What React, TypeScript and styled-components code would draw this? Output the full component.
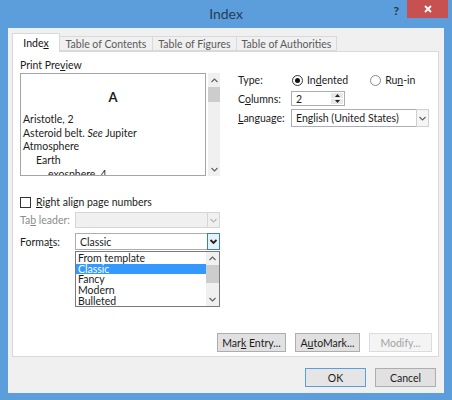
import React from 'react';
import styled, { createGlobalStyle, css } from 'styled-components';

const Global = createGlobalStyle`
  html, body { margin: 0; padding: 0; width: 452px; height: 400px; overflow: hidden; background: #5c9ddb; }
  body { font-family: Lato, "Noto Sans", sans-serif; font-size: 10.5px; color: #1b1b1b; }
  #root { width: 452px; height: 400px; }
  * { box-sizing: border-box; }
`;

const Window = styled.div`
  width: 452px;
  height: 400px;
  background: #5c9ddb;
  display: flex;
  flex-direction: column;
`;

const TitleBar = styled.div`
  height: 28px;
  display: grid;
  grid-template-columns: 1fr auto 1fr;
`;

const Title = styled.div`
  grid-column: 2;
  align-self: center;
  font-size: 14px;
  color: #263d57;
  padding-bottom: 1px;
`;

const Controls = styled.div`
  grid-column: 3;
  display: flex;
  justify-content: flex-end;
  align-items: flex-start;
  padding-right: 4px;
`;

const Help = styled.div`
  font-size: 12px;
  font-weight: 700;
  color: #23384d;
  margin: 3px 8px 0 0;
`;

const Close = styled.div`
  width: 41px;
  height: 18px;
  background: #c75050;
  display: flex;
  align-items: center;
  justify-content: center;
`;

const Client = styled.div`
  flex: 1;
  margin: 0 8px 7px 8px;
  background: #f0f0f0;
  padding: 5px 5px 6px 4px;
  display: flex;
  flex-direction: column;
`;

const TabStrip = styled.div`
  height: 19px;
  display: flex;
  align-items: flex-end;
  margin-bottom: -1px;
  position: relative;
  z-index: 1;
`;

const Tab = styled.div<{ $w: number; $active?: boolean }>`
  width: ${p => p.$w}px;
  height: ${p => (p.$active ? 19 : 15)}px;
  margin-bottom: ${p => (p.$active ? 0 : 1)}px;
  border: 1px solid #d9d9d9;
  border-bottom: ${p => (p.$active ? 'none' : '1px solid #d9d9d9')};
  border-left-width: ${p => (p.$active ? 1 : 0)}px;
  background: ${p => (p.$active ? '#fff' : '#f0f0f0')};
  color: ${p => (p.$active ? '#111' : '#5a5a5a')};
  display: flex;
  align-items: center;
  justify-content: center;
  padding-bottom: ${p => (p.$active ? 1 : 0)}px;
`;

const Panel = styled.div`
  height: 306px;
  background: #fff;
  border: 1px solid #d9d9d9;
  padding: 6px 6px 4px 7px;
  display: flex;
  flex-direction: column;
`;

const Columns = styled.div`
  display: grid;
  grid-template-columns: 200px 191px;
  column-gap: 18px;
  flex: 1;
  align-items: start;
`;

const LeftCol = styled.div`
  display: flex;
  flex-direction: column;
`;

const RightCol = styled.div`
  display: flex;
  flex-direction: column;
  padding-top: 15px;
`;

const Label = styled.div<{ $disabled?: boolean; $w?: number }>`
  line-height: 14px;
  white-space: nowrap;
  color: ${p => (p.$disabled ? '#8c8c8c' : '#1b1b1b')};
  ${p => p.$w && css`width: ${p.$w}px; flex: none;`}
`;

const PreviewRow = styled.div`
  margin-top: 1px;
  height: 103px;
  display: flex;
  gap: 2px;
`;

const PreviewBox = styled.div`
  width: 186px;
  border: 1px solid #a5a5a5;
  overflow: hidden;
  padding: 0 2px;
`;

const PreviewHeading = styled.div`
  text-align: center;
  font-weight: 700;
  font-size: 13px;
  line-height: 16px;
  margin: 15px 0 8px;
`;

const PreviewLine = styled.div<{ $indent?: number }>`
  line-height: 13.7px;
  padding-left: ${p => p.$indent ?? 0}px;
  white-space: nowrap;
`;

const Em = styled.span`
  font-style: italic;
`;

const ScrollBar = styled.div<{ $w?: number }>`
  width: ${p => p.$w ?? 12}px;
  background: #f0f0f0;
  display: flex;
  flex-direction: column;
`;

const ScrollArrow = styled.div<{ $h?: number }>`
  height: ${p => p.$h ?? 14}px;
  display: flex;
  align-items: center;
  justify-content: center;
  flex: none;
`;

const Thumb = styled.div<{ $h: number }>`
  height: ${p => p.$h}px;
  background: #cdcdcd;
  flex: none;
`;

const Spacer = styled.div`
  flex: 1;
`;

const CheckRow = styled.div`
  margin-top: 19px;
  display: flex;
  align-items: center;
  gap: 5px;
  height: 14px;
`;

const CheckBox = styled.div`
  width: 11px;
  height: 11px;
  border: 1px solid #333;
  background: #fff;
`;

const FieldRow = styled.div<{ $mt: number }>`
  margin-top: ${p => p.$mt}px;
  display: flex;
  align-items: center;
  position: relative;
`;

const Select = styled.div<{ $w: number; $h: number; $disabled?: boolean }>`
  width: ${p => p.$w}px;
  height: ${p => p.$h}px;
  border: 1px solid ${p => (p.$disabled ? '#d5d5d5' : '#abadb3')};
  background: ${p => (p.$disabled ? '#f0f0f0' : '#fff')};
  display: flex;
  align-items: stretch;
  position: relative;
`;

const SelectText = styled.div`
  flex: 1;
  display: flex;
  align-items: center;
  padding-left: 4px;
  white-space: nowrap;
`;

const DropButton = styled.div<{ $variant: 'plain' | 'active' | 'disabled' }>`
  width: 13px;
  margin: -1px -1px -1px 0;
  display: flex;
  align-items: center;
  justify-content: center;
  ${p =>
    p.$variant === 'active'
      ? css`background: #e5f1fb; border: 1px solid #3c7fb1;`
      : p.$variant === 'disabled'
      ? css`background: #f0f0f0; border: 1px solid #d5d5d5;`
      : css`background: #f5f5f5; border: 1px solid #cfcfcf;`}
`;

const ListBox = styled.div`
  position: absolute;
  left: 55px;
  top: 100%;
  margin-top: 1px;
  width: 145px;
  height: 56px;
  border: 1px solid #7a7a7a;
  background: #fff;
  display: flex;
`;

const ListItems = styled.div`
  flex: 1;
  padding-top: 1px;
`;

const ListItem = styled.div<{ $selected?: boolean }>`
  height: 10.7px;
  line-height: 10.7px;
  padding-left: 2px;
  background: ${p => (p.$selected ? '#3399ff' : 'transparent')};
  color: ${p => (p.$selected ? '#fff' : '#1b1b1b')};
`;

const RadioGroup = styled.div`
  display: flex;
  align-items: center;
  height: 14px;
`;

const RadioOption = styled.div<{ $gap?: number }>`
  display: flex;
  align-items: center;
  gap: 4px;
  margin-right: ${p => p.$gap ?? 0}px;
`;

const RadioCircle = styled.div<{ $on?: boolean }>`
  width: 11px;
  height: 11px;
  border-radius: 50%;
  border: 1px solid ${p => (p.$on ? '#333' : '#8a8a8a')};
  background: #fff;
  display: flex;
  align-items: center;
  justify-content: center;
  &::after {
    content: '';
    display: ${p => (p.$on ? 'block' : 'none')};
    width: 5px;
    height: 5px;
    border-radius: 50%;
    background: #111;
  }
`;

const SpinBox = styled.div`
  width: 54px;
  height: 15px;
  border: 1px solid #abadb3;
  background: #fff;
  display: flex;
`;

const SpinButtons = styled.div`
  width: 12px;
  display: flex;
  flex-direction: column;
  margin: 1px 1px 1px 0;
  gap: 1px;
`;

const SpinBtn = styled.div`
  flex: 1;
  background: #e8e8e8;
  display: flex;
  align-items: center;
  justify-content: center;
`;

const BottomRow = styled.div<{ $gap: number }>`
  display: flex;
  justify-content: flex-end;
  gap: ${p => p.$gap}px;
`;

const Button = styled.div<{ $w: number; $variant?: 'default' | 'disabled' }>`
  width: ${p => p.$w}px;
  height: 19px;
  display: flex;
  align-items: center;
  justify-content: center;
  white-space: pre;
  border: 1px solid #adadad;
  background: #e1e1e1;
  color: #1b1b1b;
  ${p =>
    p.$variant === 'default' &&
    css`
      border-color: #5a9ee0;
      background: #e5e5e5;
    `}
  ${p =>
    p.$variant === 'disabled' &&
    css`
      border-color: #dcdcdc;
      background: #f4f4f4;
      color: #a3a3a3;
    `}
`;

const DialogButtons = styled(BottomRow)`
  margin-top: 11px;
  padding-right: 3px;
`;

const U = styled.span`
  text-decoration: underline;
  text-underline-offset: 1px;
`;

const Chevron = ({ up, color = '#606060', bold }: { up?: boolean; color?: string; bold?: boolean }) => (
  <svg width="7" height="5" viewBox="0 0 7 5">
    <path
      d={up ? 'M0.5 4 L3.5 1 L6.5 4' : 'M0.5 1 L3.5 4 L6.5 1'}
      fill="none"
      stroke={color}
      strokeWidth={bold ? 1.8 : 1.1}
    />
  </svg>
);

const Tri = ({ up }: { up?: boolean }) => (
  <svg width="5" height="3" viewBox="0 0 5 3">
    <path d={up ? 'M0 3 L2.5 0 L5 3 Z' : 'M0 0 L5 0 L2.5 3 Z'} fill="#222" />
  </svg>
);

export default function App() {
  return (
    <>
      <Global />
      <Window>
        <TitleBar>
          <Title>Index</Title>
          <Controls>
            <Help>?</Help>
            <Close>
              <svg width="8" height="8" viewBox="0 0 8 8">
                <path d="M1 1 L7 7 M7 1 L1 7" stroke="#fff" strokeWidth="1.8" />
              </svg>
            </Close>
          </Controls>
        </TitleBar>
        <Client>
          <TabStrip>
            <Tab $w={48} $active>
              <span>
                Inde<U>x</U>
              </span>
            </Tab>
            <Tab $w={93}>Table of Contents</Tab>
            <Tab $w={84}>Table of Figures</Tab>
            <Tab $w={100}>Table of Authorities</Tab>
          </TabStrip>
          <Panel>
            <Columns>
              <LeftCol>
                <Label>
                  Print Pre<U>v</U>iew
                </Label>
                <PreviewRow>
                  <PreviewBox>
                    <PreviewHeading>A</PreviewHeading>
                    <PreviewLine>Aristotle, 2</PreviewLine>
                    <PreviewLine>
                      Asteroid belt. <Em>See</Em> Jupiter
                    </PreviewLine>
                    <PreviewLine>Atmosphere</PreviewLine>
                    <PreviewLine $indent={13}>Earth</PreviewLine>
                    <PreviewLine $indent={25}>exosphere, 4</PreviewLine>
                  </PreviewBox>
                  <ScrollBar>
                    <ScrollArrow>
                      <Chevron up />
                    </ScrollArrow>
                    <Thumb $h={15} />
                    <Spacer />
                    <ScrollArrow>
                      <Chevron />
                    </ScrollArrow>
                  </ScrollBar>
                </PreviewRow>
                <CheckRow>
                  <CheckBox />
                  <Label>
                    <U>R</U>ight align page numbers
                  </Label>
                </CheckRow>
                <FieldRow $mt={3}>
                  <Label $disabled $w={55}>
                    Ta<U>b</U> leader:
                  </Label>
                  <Select $w={145} $h={16} $disabled>
                    <SelectText />
                    <DropButton $variant="disabled">
                      <Chevron color="#b5b5b5" />
                    </DropButton>
                  </Select>
                </FieldRow>
                <FieldRow $mt={5}>
                  <Label $w={55}>
                    Forma<U>t</U>s:
                  </Label>
                  <Select $w={145} $h={17}>
                    <SelectText>Classic</SelectText>
                    <DropButton $variant="active">
                      <Chevron color="#1e1e1e" bold />
                    </DropButton>
                  </Select>
                  <ListBox>
                    <ListItems>
                      <ListItem>From template</ListItem>
                      <ListItem $selected>Classic</ListItem>
                      <ListItem>Fancy</ListItem>
                      <ListItem>Modern</ListItem>
                      <ListItem>Bulleted</ListItem>
                    </ListItems>
                    <ScrollBar $w={13}>
                      <ScrollArrow $h={13}>
                        <Chevron up />
                      </ScrollArrow>
                      <Thumb $h={18} />
                      <Spacer />
                      <ScrollArrow $h={13}>
                        <Chevron />
                      </ScrollArrow>
                    </ScrollBar>
                  </ListBox>
                </FieldRow>
              </LeftCol>
              <RightCol>
                <FieldRow $mt={0}>
                  <Label $w={54}>Type:</Label>
                  <RadioGroup>
                    <RadioOption $gap={22}>
                      <RadioCircle $on />
                      <Label>
                        In<U>d</U>ented
                      </Label>
                    </RadioOption>
                    <RadioOption>
                      <RadioCircle />
                      <Label>
                        Ru<U>n</U>-in
                      </Label>
                    </RadioOption>
                  </RadioGroup>
                </FieldRow>
                <FieldRow $mt={4}>
                  <Label $w={53}>
                    C<U>o</U>lumns:
                  </Label>
                  <SpinBox>
                    <SelectText>2</SelectText>
                    <SpinButtons>
                      <SpinBtn>
                        <Tri up />
                      </SpinBtn>
                      <SpinBtn>
                        <Tri />
                      </SpinBtn>
                    </SpinButtons>
                  </SpinBox>
                </FieldRow>
                <FieldRow $mt={3}>
                  <Label $w={53}>
                    <U>L</U>anguage:
                  </Label>
                  <Select $w={138} $h={18}>
                    <SelectText>English (United States)</SelectText>
                    <DropButton $variant="plain">
                      <Chevron />
                    </DropButton>
                  </Select>
                </FieldRow>
              </RightCol>
            </Columns>
            <BottomRow $gap={9}>
              <Button $w={69}>
                <span>
                  Mar<U>k</U> Entry...
                </span>
              </Button>
              <Button $w={65}>
                <span>
                  A<U>u</U>toMark...
                </span>
              </Button>
              <Button $w={63} $variant="disabled">
                Modify...
              </Button>
            </BottomRow>
          </Panel>
          <DialogButtons $gap={9}>
            <Button $w={61} $variant="default">
              OK
            </Button>
            <Button $w={61}>Cancel</Button>
          </DialogButtons>
        </Client>
      </Window>
    </>
  );
}
